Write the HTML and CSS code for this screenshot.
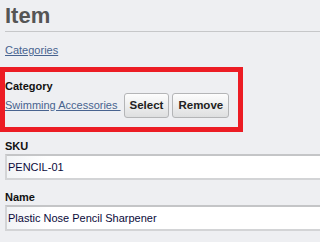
FILE: index.html
```html
<!DOCTYPE html>
<html>
<head>
<meta charset="utf-8">
<link rel="stylesheet" href="styles.css">
</head>
<body>
<div class="page">
  <h1 class="title">Item</h1>
  <div class="crumbs"><a href="#" class="link">Categories</a></div>
  <div class="category-box">
    <div class="label">Category</div>
    <div class="cat-row">
      <a href="#" class="link">Swimming Accessories&nbsp;</a>
      <button class="btn" type="button">Select</button>
      <button class="btn" type="button">Remove</button>
    </div>
  </div>
  <div class="field">
    <div class="label">SKU</div>
    <input class="text-input" type="text" value="PENCIL-01">
  </div>
  <div class="field">
    <div class="label">Name</div>
    <input class="text-input" type="text" value="Plastic Nose Pencil Sharpener">
  </div>
</div>
</body>
</html>
```
FILE: styles.css
```css
html, body {
  margin: 0;
  padding: 0;
  background: #eeeff2;
  overflow: hidden;
}
.page {
  padding: 0 0 0 5px;
  height: 242px;
  overflow: hidden;
  font-family: "Liberation Sans", Arial, sans-serif;
  font-size: 11px;
  color: #000;
}
.title {
  margin: 3px 0 0 0;
  padding: 0 0 3px 0;
  font-size: 22px;
  line-height: 25px;
  font-weight: bold;
  color: #555555;
  border-bottom: 1px solid #c6c7c9;
}
.crumbs {
  margin-top: 11px;
  line-height: 14px;
}
.link {
  color: #48638f;
  text-decoration: underline;
  font-size: 11px;
}
.category-box {
  margin-top: 15px;
  width: 233px;
  padding: 7px 0 9px 0;
  outline: 5px solid #ec1c24;
}
.label {
  font-weight: bold;
  font-size: 11px;
  line-height: 14px;
  color: #111;
}
.cat-row {
  display: flex;
  align-items: baseline;
  gap: 3px;
  line-height: 14px;
}
.btn {
  font-family: "Liberation Sans", Arial, sans-serif;
  font-size: 11.5px;
  font-weight: bold;
  line-height: 15px;
  height: 25px;
  padding: 4px 5px;
  margin: 0;
  color: #222;
  background: linear-gradient(#fdfdfd, #dedfe0);
  border: 1px solid #b4b5b7;
  border-radius: 3px;
  box-sizing: border-box;
}
.field {
  margin-top: 12px;
}
.field + .field {
  margin-top: 10px;
}
.field .label {
  margin-bottom: 1px;
}
.text-input {
  display: block;
  box-sizing: border-box;
  width: calc(100% + 20px);
  height: 26px;
  margin: 0;
  padding: 0 0 0 1px;
  font-family: "Liberation Sans", Arial, sans-serif;
  font-size: 11px;
  color: #0a0a3a;
  background: linear-gradient(90deg, #f2f4f6, #ffffff 40px);
  border: 2px solid #d3d4d6;
  border-top-color: #c4c5c7;
  outline: none;
}
```
